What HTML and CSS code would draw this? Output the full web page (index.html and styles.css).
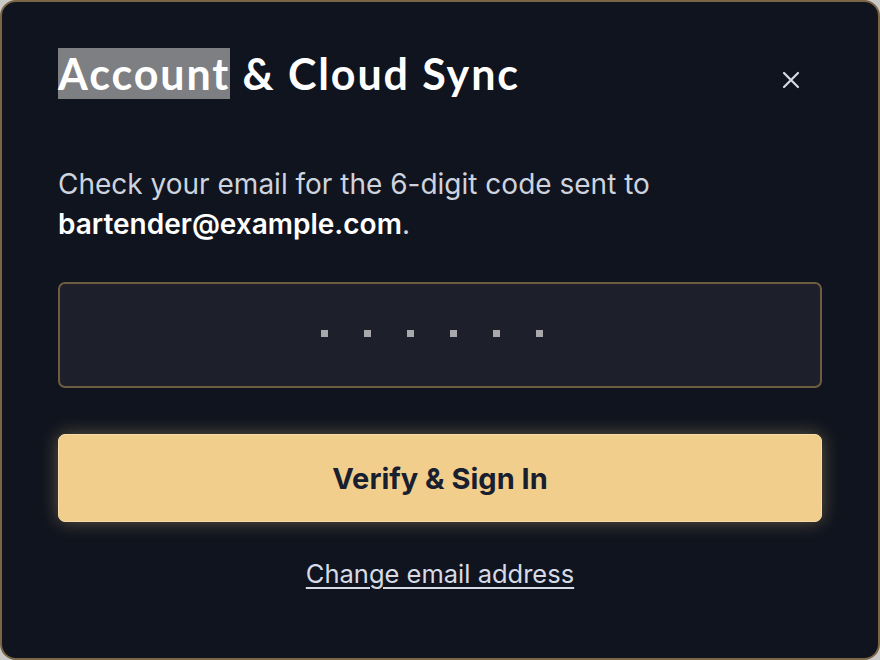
FILE: index.html
```html
<!DOCTYPE html>
<html>
<head>
<meta charset="utf-8">
<link rel="stylesheet" href="styles.css">
</head>
<body>
<div class="modal">
  <div class="header">
    <h1 class="title"><span class="sel">Account</span> &amp; Cloud Sync</h1>
    <button class="close" aria-label="Close">
      <svg width="18" height="18" viewBox="0 0 18 18"><path d="M2 2L16 16M16 2L2 16" stroke="#d6dbe6" stroke-width="2.2" stroke-linecap="round"/></svg>
    </button>
  </div>
  <p class="msg">Check your email for the 6-digit code sent to <strong>bartender@example.com</strong>.</p>
  <div class="code">
    <span class="dot"></span><span class="dot"></span><span class="dot"></span><span class="dot"></span><span class="dot"></span><span class="dot"></span>
  </div>
  <button class="verify">Verify &amp; Sign In</button>
  <div class="change"><a href="#">Change email address</a></div>
</div>
</body>
</html>
```
FILE: styles.css
```css
html, body {
  margin: 0;
  padding: 0;
  background: #c9c9c9;
}
.modal {
  box-sizing: border-box;
  width: 880px;
  height: 660px;
  border: 2px solid #7a6544;
  border-radius: 16px;
  background: #10141e;
  padding: 46px 56px 0 56px;
  font-family: "Inter", "DejaVu Sans", sans-serif;
}
.header {
  display: flex;
  align-items: center;
  justify-content: space-between;
}
.title {
  margin: 0;
  font-family: "Lato", "Liberation Sans", sans-serif;
  font-weight: 700;
  font-size: 43px;
  line-height: 52px;
  letter-spacing: 1.9px;
  color: #ffffff;
}
.sel {
  background: #7e7f83;
}
.close {
  background: none;
  border: 0;
  padding: 0;
  margin-right: 22px;
  width: 18px;
  height: 18px;
  display: flex;
  margin-top: 12px;
}
.msg {
  margin: 64px 0 0 0;
  font-size: 28px;
  line-height: 40px;
  color: #cdd3df;
}
.msg strong {
  color: #ffffff;
  font-weight: 600;
}
.code {
  margin-top: 38px;
  height: 98px;
  border: 2px solid #6e5c40;
  border-radius: 7px;
  background: #1d202a;
  display: flex;
  align-items: center;
  justify-content: center;
  gap: 36px;
  padding-right: 16px;
  padding-bottom: 4px;
}
.dot {
  width: 7px;
  height: 7px;
  background: #a9a9ab;
}
.verify {
  display: block;
  width: 100%;
  height: 88px;
  margin-top: 46px;
  border: 1px solid #f6dca8;
  border-radius: 7px;
  background: #f2ce8c;
  box-shadow: 0 0 18px rgba(242, 206, 140, 0.35);
  color: #18202f;
  font-family: "Inter", "DejaVu Sans", sans-serif;
  font-size: 29px;
  font-weight: 700;
}
.change {
  margin-top: 36px;
  text-align: center;
}
.change a {
  color: #d6dbe6;
  font-size: 25.5px;
  text-decoration: underline;
  text-underline-offset: 4px;
}
```
